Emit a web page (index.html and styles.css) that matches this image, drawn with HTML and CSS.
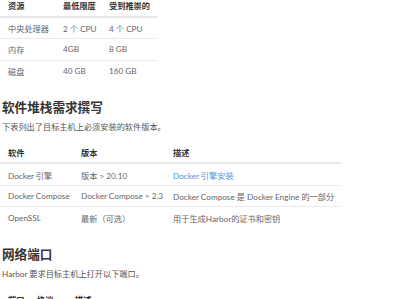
FILE: index.html
```html
<!DOCTYPE html>
<html lang="zh-CN">
<head>
<meta charset="utf-8">
<title>Harbor 安装要求</title>
<link rel="stylesheet" href="styles.css">
</head>
<body>
<main class="doc">
  <table class="spec spec-hw">
    <colgroup><col class="c1"><col class="c2"><col class="c3"></colgroup>
    <thead>
      <tr><th>资源</th><th>最低限度</th><th>受到推崇的</th></tr>
    </thead>
    <tbody>
      <tr><td>中央处理器</td><td>2 个 CPU</td><td>4 个 CPU</td></tr>
      <tr><td>内存</td><td>4GB</td><td>8 GB</td></tr>
      <tr><td>磁盘</td><td>40 GB</td><td>160 GB</td></tr>
    </tbody>
  </table>

  <h2 class="title">软件堆栈需求撰写</h2>
  <p class="lead">下表列出了目标主机上必须安装的软件版本。</p>

  <table class="spec spec-sw">
    <colgroup><col class="c1"><col class="c2"><col class="c3"></colgroup>
    <thead>
      <tr><th>软件</th><th>版本</th><th>描述</th></tr>
    </thead>
    <tbody>
      <tr><td>Docker 引擎</td><td>版本 &gt; 20.10</td><td><a class="link" href="#">Docker 引擎安装</a></td></tr>
      <tr><td>Docker Compose</td><td>Docker Compose &gt; 2.3</td><td>Docker Compose 是 Docker Engine 的一部分</td></tr>
      <tr><td>OpenSSL</td><td>最新（可选）</td><td>用于生成Harbor的证书和密钥</td></tr>
    </tbody>
  </table>

  <h2 class="title">网络端口</h2>
  <p class="lead">Harbor 要求目标主机上打开以下端口。</p>

  <table class="spec spec-net">
    <colgroup><col class="c1"><col class="c2"><col class="c3"></colgroup>
    <thead>
      <tr><th>端口</th><th>协议</th><th>描述</th></tr>
    </thead>
  </table>
</main>
</body>
</html>
```
FILE: styles.css
```css
html, body {
  margin: 0;
  padding: 0;
  background: #fff;
}

body {
  font-family: Lato, "Noto Sans CJK SC", sans-serif;
  font-size: 8.2px;
  color: #666;
}

.doc {
  margin-top: -5px;
}

/* tables */
.spec {
  border-collapse: collapse;
  table-layout: fixed;
}

.spec th,
.spec td {
  height: 21.7px;
  padding: 0 0 0 8px;
  text-align: left;
  vertical-align: middle;
  white-space: nowrap;
  box-sizing: border-box;
}

.spec th {
  font-weight: 700;
  color: #333;
  border-bottom: 2px solid #e8e8e8;
}

.spec tbody tr + tr td {
  border-top: 1px solid #eaeaea;
}

.spec-hw { width: 157px; }
.spec-hw .c1 { width: 55px; }
.spec-hw .c2 { width: 46px; }
.spec-hw .c3 { width: 56px; }

.spec-sw { width: 341px; }
.spec-sw .c1 { width: 73px; }
.spec-sw .c2 { width: 92px; }
.spec-sw .c3 { width: 176px; }

.spec-net { width: 200px; }
.spec-net .c1 { width: 29px; }
.spec-net .c2 { width: 38px; }
.spec-net .c3 { width: 133px; }

/* headings and paragraphs */
.title {
  margin: 0;
  padding: 17px 0 0 2px;
  font-size: 12.6px;
  line-height: 18px;
  font-weight: 700;
  color: #333;
}

.lead {
  margin: 0;
  padding: 4px 0 9px 2px;
  font-size: 8.2px;
  line-height: 12px;
  color: #555;
}

.link {
  color: #4a98dc;
  text-decoration: none;
}
```
